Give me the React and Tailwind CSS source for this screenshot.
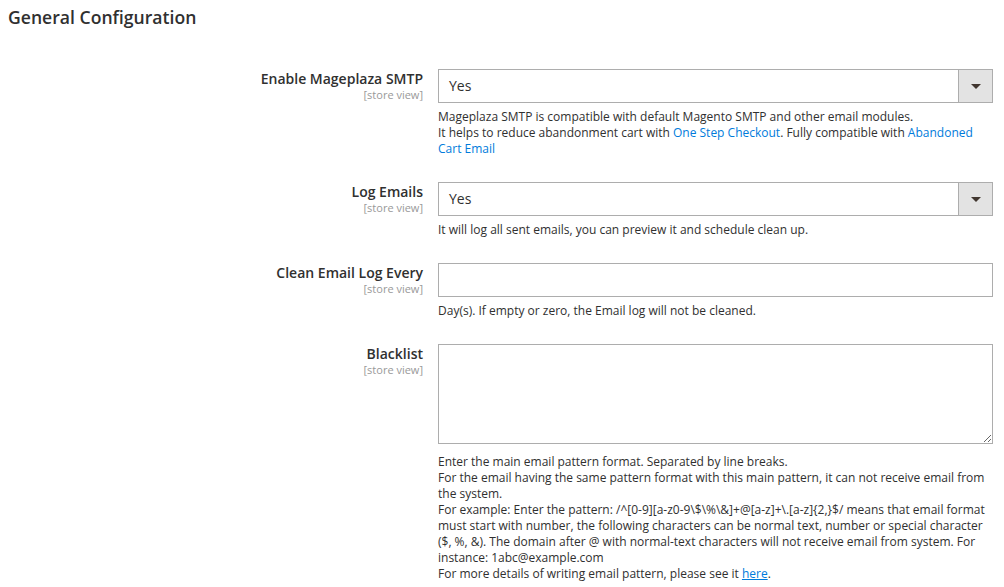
import React from "react";

function Select({ value }) {
  return (
    <div className="h-[34px] border border-[#adadad] bg-white flex items-stretch">
      <span className="flex-1 pl-[10px] text-[14px] leading-[32px] text-[#303030]">{value}</span>
      <div className="w-[34px] bg-[#e3e3e3] border-l border-[#adadad] flex items-center justify-center">
        <div className="w-0 h-0 border-l-[5px] border-r-[5px] border-t-[5px] border-l-transparent border-r-transparent border-t-[#41362f]" />
      </div>
    </div>
  );
}

function Label({ title }) {
  return (
    <div className="w-[423px] shrink-0 text-right">
      <div className="text-[14px] font-semibold leading-[19px] text-[#303030]">{title}</div>
      <div className="text-[11px] leading-[14px] text-[#999]">[store view]</div>
    </div>
  );
}

function Row({ title, children }) {
  return (
    <div className="flex">
      <Label title={title} />
      <div className="ml-[15px] w-[555px]">{children}</div>
    </div>
  );
}

const link = "text-[#007bdb]";

export default function App() {
  return (
    <div className="w-[1004px] h-[587px] overflow-hidden bg-white font-['Open_Sans',sans-serif] text-[#303030]">
      <h2 className="pl-[8px] pt-[5px] text-[17.6px] font-semibold leading-[24px] text-[#303030]">
        General Configuration
      </h2>
      <div className="mt-[40px] flex flex-col gap-[25px]">
        <Row title="Enable Mageplaza SMTP">
          <Select value="Yes" />
          <div className="mt-[6px] text-[12px] leading-[16px]">
            Mageplaza SMTP is compatible with default Magento SMTP and other email modules.
            <br />
            It helps to reduce abandonment cart with <span className={link}>One Step Checkout</span>. Fully compatible with{" "}
            <span className={link}>Abandoned Cart Email</span>
          </div>
        </Row>
        <Row title="Log Emails">
          <Select value="Yes" />
          <div className="mt-[6px] text-[12px] leading-[16px]">
            It will log all sent emails, you can preview it and schedule clean up.
          </div>
        </Row>
        <Row title="Clean Email Log Every">
          <div className="h-[34px] border border-[#adadad] bg-white" />
          <div className="mt-[6px] text-[12px] leading-[16px]">
            Day(s). If empty or zero, the Email log will not be cleaned.
          </div>
        </Row>
        <Row title="Blacklist">
          <textarea className="block w-full h-[100px] border border-[#adadad] bg-white resize-y outline-none" />
          <div className="mt-[10px] text-[12px] leading-[16px]">
            Enter the main email pattern format. Separated by line breaks.
            <br />
            For the email having the same pattern format with this main pattern, it can not receive email from the system.
            <br />
            For example: Enter the pattern: {"/^[0-9][a-z0-9\\$\\%\\&]+@[a-z]+\\.[a-z]{2,}$/"} means that email format must start with number, the following characters can be normal text, number or special character ($, %, &amp;). The domain after @ with normal-text characters will not receive email from system. For instance: 1abc@example.com
            <br />
            For more details of writing email pattern, please see it <span className={`${link} underline`}>here</span>.
          </div>
        </Row>
      </div>
    </div>
  );
}
